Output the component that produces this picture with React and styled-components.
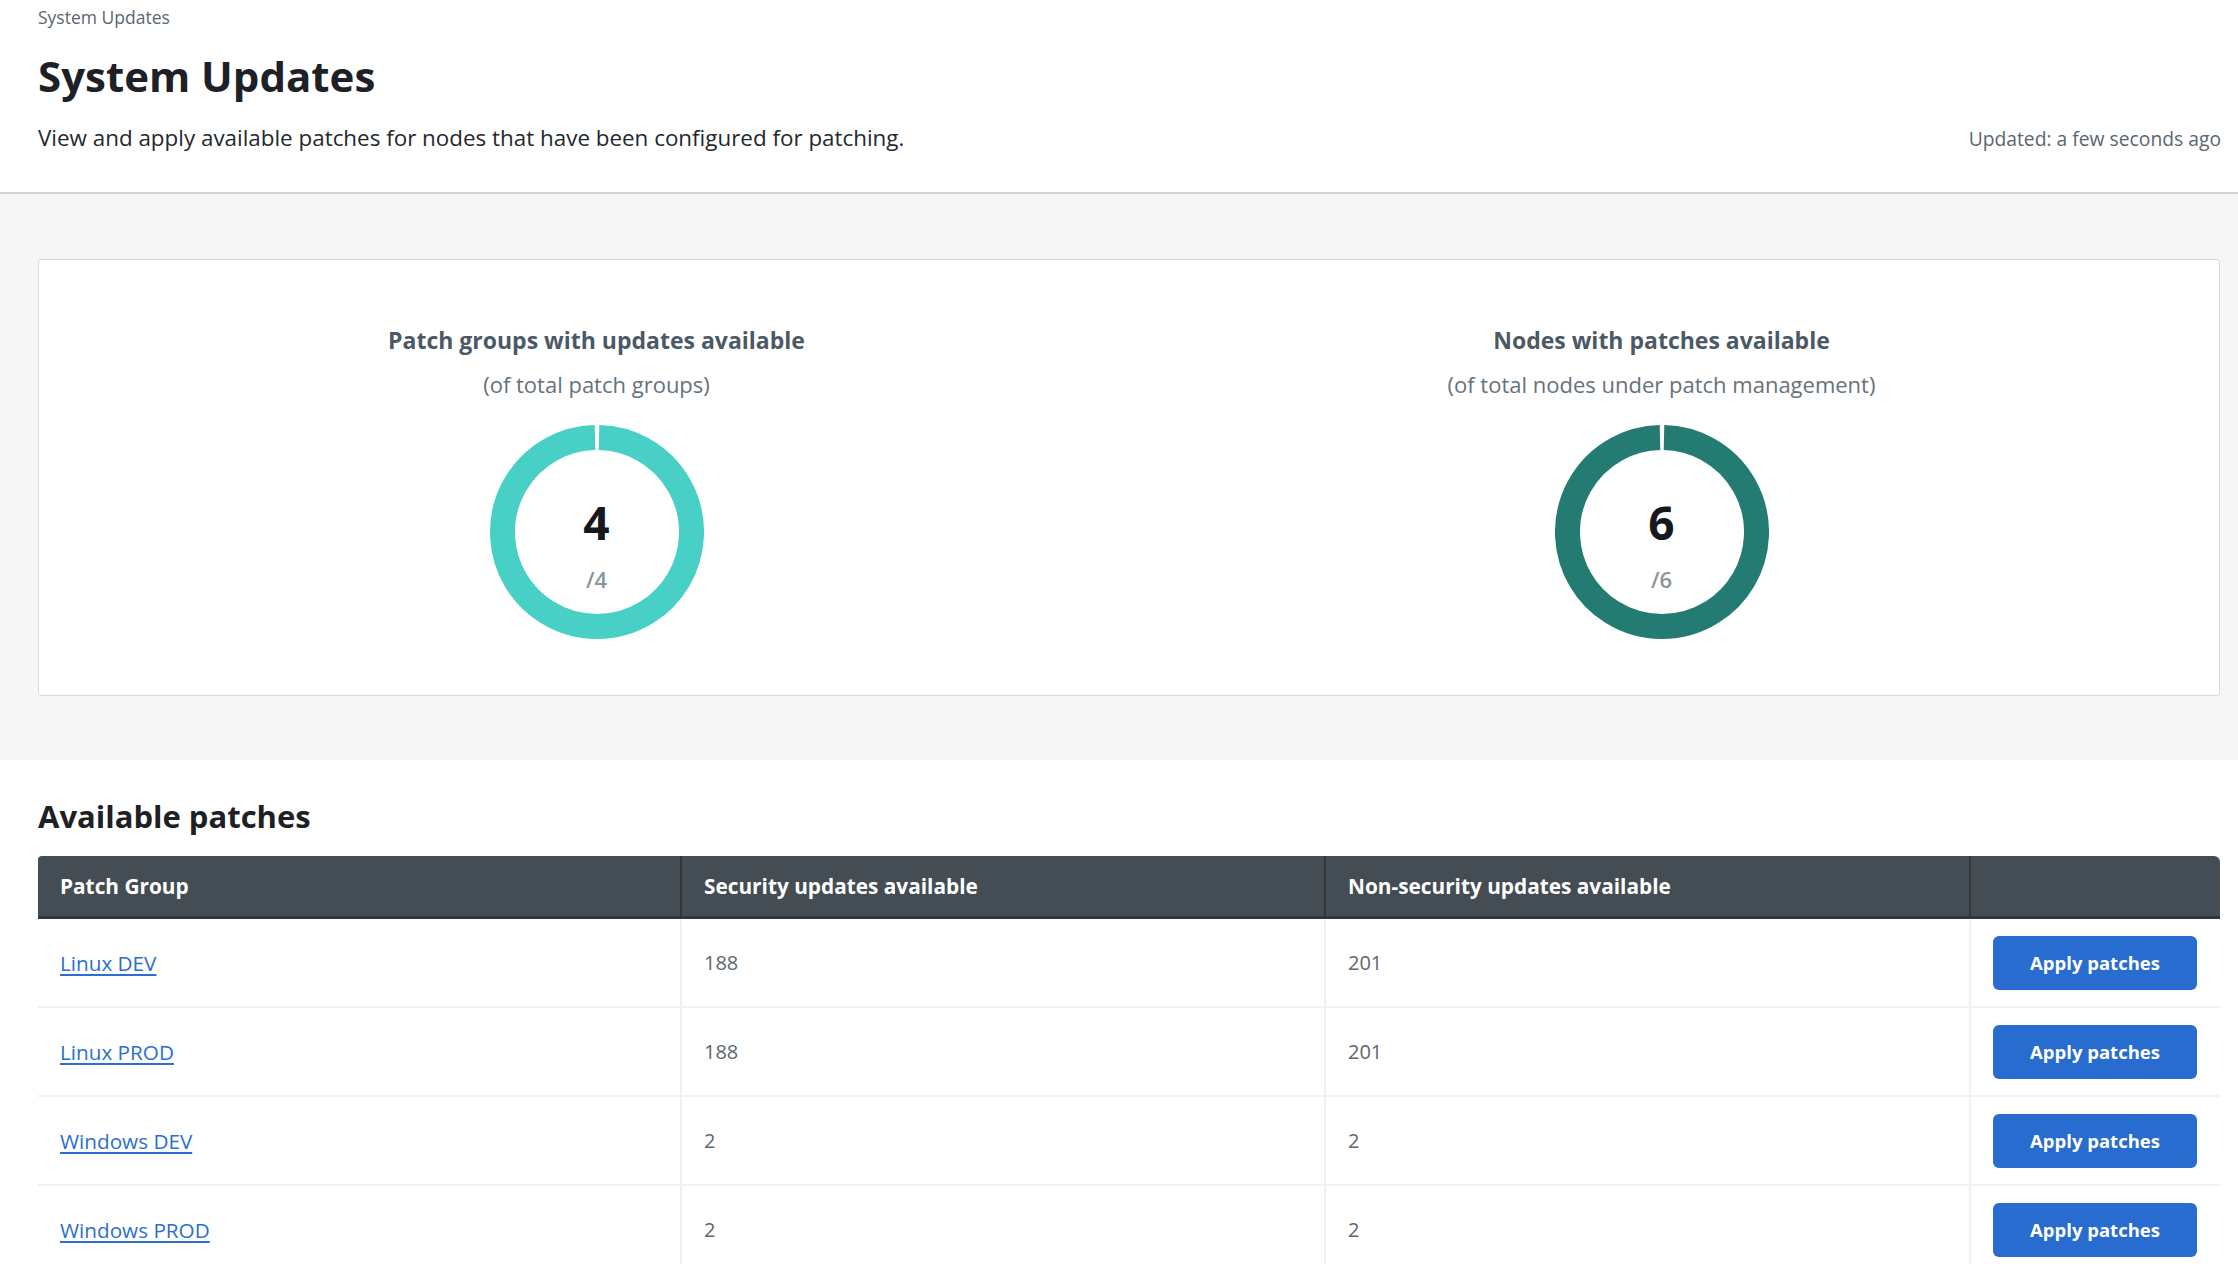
import React from "react";
import styled, { createGlobalStyle } from "styled-components";

const GlobalStyle = createGlobalStyle`
  body {
    margin: 0;
    background: #ffffff;
    font-family: "Open Sans", "Noto Sans", sans-serif;
    color: #1f2327;
  }
`;

const Header = styled.header`
  background: #ffffff;
  padding: 4px 17px 0 38px;
  height: 188px;
  border-bottom: 2px solid #cfd5dd;
  box-sizing: content-box;
`;

const Breadcrumb = styled.div`
  font-size: 17.5px;
  color: #5a6670;
  line-height: 26px;
`;

const Title = styled.h1`
  margin: 16px 0 0;
  font-size: 42px;
  font-weight: 700;
  line-height: 60px;
  color: #1d2126;
`;

const HeaderRow = styled.div`
  display: flex;
  justify-content: space-between;
  align-items: baseline;
  margin-top: 17px;
`;

const Description = styled.p`
  margin: 0;
  font-size: 22.4px;
  line-height: 30px;
  color: #23292e;
`;

const Updated = styled.span`
  font-size: 19.3px;
  color: #5a6670;
`;

const Summary = styled.section`
  background: #f6f6f6;
  padding: 65px 18px 64px 38px;
`;

const Card = styled.div`
  background: #ffffff;
  border: 1px solid #d6dadf;
  border-radius: 3px;
  height: 435px;
  padding: 0 25px;
  display: grid;
  grid-template-columns: 1fr 1fr;
`;

const Chart = styled.div`
  display: flex;
  flex-direction: column;
  align-items: center;
  padding-top: 64px;
`;

const ChartTitle = styled.div`
  font-size: 23px;
  font-weight: 700;
  color: #4b5966;
  line-height: 32px;
`;

const ChartSub = styled.div`
  font-size: 22px;
  color: #66727c;
  margin-top: 14px;
  line-height: 28px;
`;

const Donut = styled.div`
  position: relative;
  width: 214px;
  height: 214px;
  margin-top: 27px;
`;

const DonutLabel = styled.div`
  position: absolute;
  inset: 0;
  display: flex;
  flex-direction: column;
  align-items: center;
  padding-top: 72px;
`;

const Count = styled.div`
  font-size: 46px;
  font-weight: 700;
  line-height: 50px;
  color: #16191c;
`;

const Total = styled.div`
  font-size: 22px;
  font-weight: 600;
  line-height: 28px;
  color: #8a949c;
  margin-top: 18px;
`;

const Patches = styled.section`
  padding: 33px 18px 0 38px;
`;

const SectionTitle = styled.h2`
  margin: 0 0 17px;
  font-size: 31px;
  font-weight: 700;
  line-height: 46px;
  color: #1d2126;
`;

const Table = styled.table`
  width: 100%;
  border-collapse: separate;
  border-spacing: 0;
  table-layout: fixed;
`;

const Th = styled.th`
  background: #434d53;
  color: #ffffff;
  text-align: left;
  font-size: 20.8px;
  font-weight: 700;
  height: 60px;
  padding: 0 22px;
  border-bottom: 3px solid #2f373b;
  border-right: 2px solid #2f373b;
  &:first-child { border-top-left-radius: 4px; }
  &:last-child { border-right: none; border-top-right-radius: 6px; }
`;

const Td = styled.td`
  height: 87px;
  padding: 0 22px;
  font-size: 20px;
  color: #5b6770;
  border-bottom: 2px solid #eef1f5;
  border-right: 2px solid #eef1f5;
  &:last-child { border-right: none; }
`;

const GroupLink = styled.a`
  color: #2a6fd1;
  text-decoration: underline;
  text-underline-offset: 3px;
  font-size: 20.7px;
  cursor: pointer;
`;

const ApplyButton = styled.button`
  width: 204px;
  height: 54px;
  border: none;
  border-radius: 6px;
  background: #276cce;
  color: #ffffff;
  font-family: "Open Sans", sans-serif;
  font-size: 18.5px;
  font-weight: 700;
  cursor: pointer;
`;

const DonutChart = ({ color, count, total }) => (
  <Donut>
    <svg width="214" height="214" viewBox="0 0 214 214">
      <path
        d="M109 12.52 A94.5 94.5 0 1 1 105 12.52"
        fill="none"
        stroke={color}
        strokeWidth="25"
      />
    </svg>
    <DonutLabel>
      <Count>{count}</Count>
      <Total>/{total}</Total>
    </DonutLabel>
  </Donut>
);

const rows = [
  { name: "Linux DEV", sec: 188, non: 201 },
  { name: "Linux PROD", sec: 188, non: 201 },
  { name: "Windows DEV", sec: 2, non: 2 },
  { name: "Windows PROD", sec: 2, non: 2 },
];

export default function App() {
  return (
    <>
      <GlobalStyle />
      <Header>
        <Breadcrumb>System Updates</Breadcrumb>
        <Title>System Updates</Title>
        <HeaderRow>
          <Description>
            View and apply available patches for nodes that have been configured for patching.
          </Description>
          <Updated>Updated: a few seconds ago</Updated>
        </HeaderRow>
      </Header>
      <Summary>
        <Card>
          <Chart>
            <ChartTitle>Patch groups with updates available</ChartTitle>
            <ChartSub>(of total patch groups)</ChartSub>
            <DonutChart color="#48d0c6" count={4} total={4} />
          </Chart>
          <Chart>
            <ChartTitle>Nodes with patches available</ChartTitle>
            <ChartSub>(of total nodes under patch management)</ChartSub>
            <DonutChart color="#237b71" count={6} total={6} />
          </Chart>
        </Card>
      </Summary>
      <Patches>
        <SectionTitle>Available patches</SectionTitle>
        <Table>
          <colgroup>
            <col style={{ width: "644px" }} />
            <col style={{ width: "644px" }} />
            <col style={{ width: "645px" }} />
            <col />
          </colgroup>
          <thead>
            <tr>
              <Th>Patch Group</Th>
              <Th>Security updates available</Th>
              <Th>Non-security updates available</Th>
              <Th />
            </tr>
          </thead>
          <tbody>
            {rows.map((r) => (
              <tr key={r.name}>
                <Td>
                  <GroupLink>{r.name}</GroupLink>
                </Td>
                <Td>{r.sec}</Td>
                <Td>{r.non}</Td>
                <Td>
                  <ApplyButton>Apply patches</ApplyButton>
                </Td>
              </tr>
            ))}
          </tbody>
        </Table>
      </Patches>
    </>
  );
}
